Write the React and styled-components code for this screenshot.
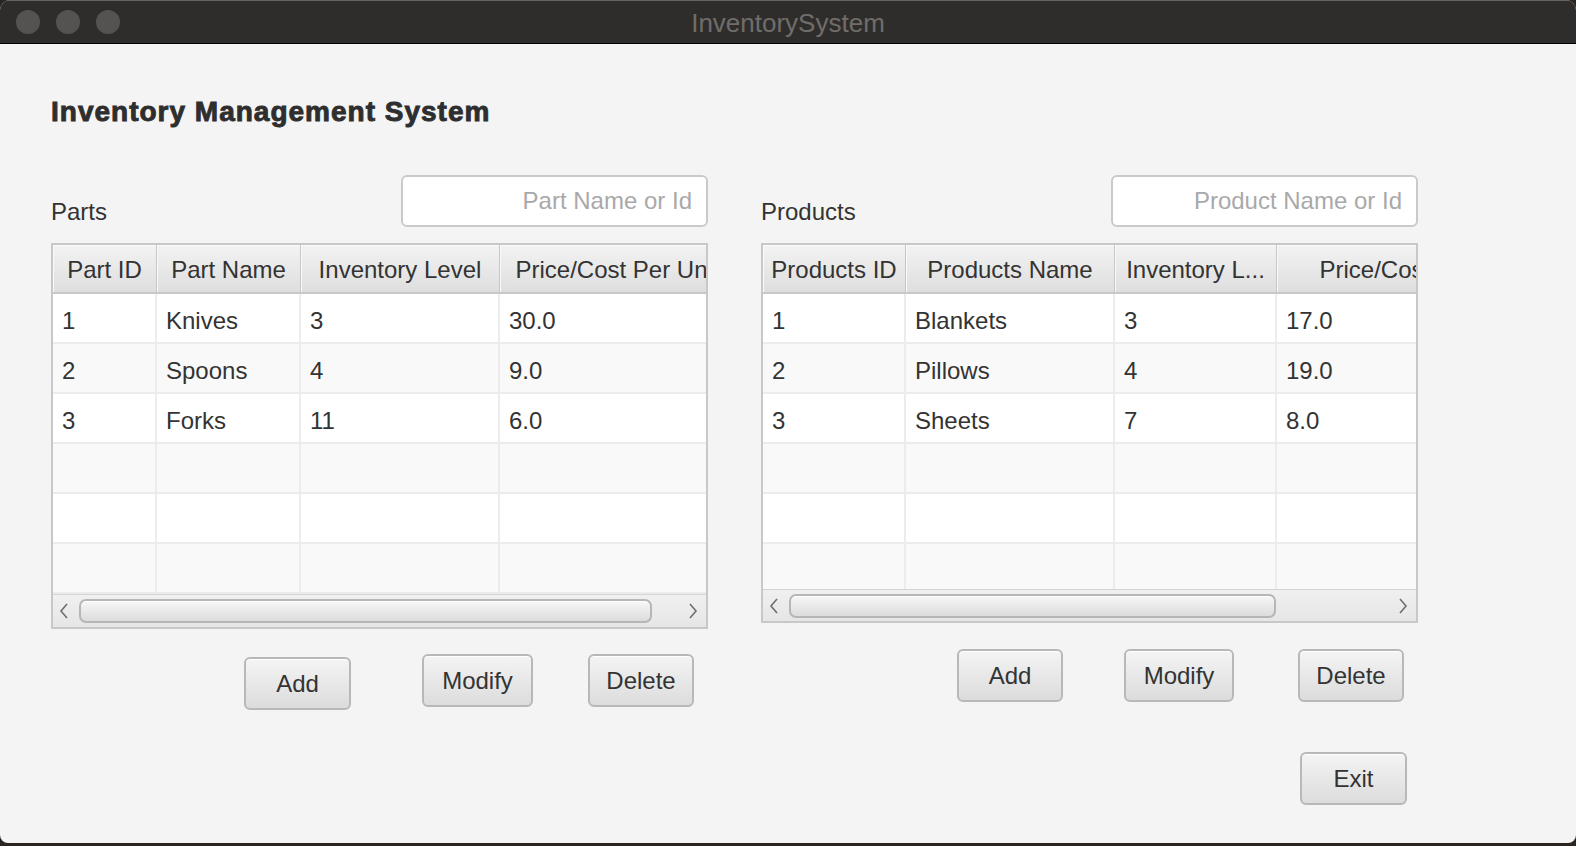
import React from 'react';
import styled, { createGlobalStyle } from 'styled-components';

const GlobalStyle = createGlobalStyle`
  html, body {
    margin: 0;
    padding: 0;
    background: #2a2520;
  }
  body {
    font-family: "Liberation Sans", Arial, sans-serif;
    color: #333;
  }
  * { box-sizing: border-box; }
`;

const Window = styled.div`
  width: 1576px;
  height: 843px;
  background: #f4f4f4;
  border-radius: 10px 10px 8px 8px;
  overflow: hidden;
  display: flex;
  flex-direction: column;
`;

const TitleBar = styled.div`
  height: 44px;
  flex-shrink: 0;
  background: #2f2d2b;
  border-top: 1px solid #67655f;
  border-bottom: 1px solid #000;
  display: grid;
  grid-template-columns: 1fr auto 1fr;
  align-items: center;
`;

const Lights = styled.div`
  display: flex;
  gap: 16px;
  padding-left: 16px;
`;

const Light = styled.span`
  width: 24px;
  height: 24px;
  border-radius: 50%;
  background: #545351;
`;

const WindowTitle = styled.div`
  font-size: 26px;
  color: #6f6d6a;
  line-height: 30px;
  padding-top: 2px;
`;

const Content = styled.div`
  padding: 52px 0 0 51px;
  display: flex;
  flex-direction: column;
`;

const Heading = styled.h1`
  margin: 0;
  font-size: 28px;
  line-height: 32px;
  font-weight: 900;
  letter-spacing: 1px;
  color: #2e2e2e;
  -webkit-text-stroke: 0.9px #2e2e2e;
`;

const Panels = styled.div`
  display: flex;
  gap: 53px;
  margin-top: 47px;
`;

const Panel = styled.section`
  width: 657px;
  display: flex;
  flex-direction: column;
`;

const PanelHeader = styled.div`
  height: 52px;
  display: flex;
  justify-content: space-between;
  align-items: flex-end;
`;

const PanelLabel = styled.div`
  font-size: 24px;
  line-height: 28px;
  padding-bottom: 1px;
  color: #333;
`;

const SearchInput = styled.input`
  width: 307px;
  height: 52px;
  border: 2px solid #cacaca;
  border-radius: 6px;
  background: #fff;
  text-align: right;
  padding: 0 14px;
  font-family: "Liberation Sans", Arial, sans-serif;
  font-size: 24px;
  color: #333;
  outline: none;

  &::placeholder {
    color: #a9a9a9;
  }
`;

const Table = styled.div`
  margin-top: 16px;
  border: 2px solid #c8c8c8;
  background: #fff;
`;

const Viewport = styled.div`
  overflow: hidden;
  height: ${(p) => p.$height}px;
`;

const Row = styled.div`
  display: grid;
  grid-template-columns: ${(p) => p.$cols};
  width: max-content;
  background: ${(p) => (p.$alt ? '#f9f9f9' : '#fff')};
`;

const HeaderCell = styled.div`
  height: 49px;
  padding-top: 3px;
  border-right: 1px solid #c6c6c6;
  border-bottom: 2px solid #c8c8c8;
  box-shadow: inset 1px 0 0 #fafafa, inset 0 1px 0 #fafafa;
  background: linear-gradient(#f3f3f3, #dedede);
  font-size: 24px;
  color: #333;
  display: flex;
  align-items: center;
  justify-content: center;
  white-space: nowrap;
  overflow: hidden;
`;

const Cell = styled.div`
  height: 50px;
  padding: 5px 0 0 9px;
  border-right: 2px solid #ececec;
  border-bottom: 2px solid #ececec;
  font-size: 24px;
  color: #333;
  display: flex;
  align-items: center;
  white-space: nowrap;
  overflow: hidden;
`;

const ScrollBar = styled.div`
  height: ${(p) => p.$height}px;
  border-top: 1px solid #d4d4d4;
  background: linear-gradient(#f0f0f0, #e6e6e6);
  display: flex;
  align-items: center;
  padding: 0 8px 0 6px;
  gap: 10px;
`;

const Track = styled.div`
  flex: 1;
  display: flex;
`;

const Thumb = styled.div`
  height: 24px;
  border: 2px solid #b6b6b6;
  border-radius: 7px;
  background: linear-gradient(#f7f7f7, #dcdcdc);
  box-shadow: inset 0 1px 0 #fff;
`;

const ButtonRow = styled.div`
  display: flex;
  align-items: flex-start;
  margin-top: ${(p) => p.$top}px;
`;

const Button = styled.button`
  width: ${(p) => p.$w}px;
  height: 53px;
  margin-left: ${(p) => p.$ml}px;
  margin-top: ${(p) => p.$mt || 0}px;
  border: 2px solid #b8b8b8;
  border-radius: 6px;
  background: linear-gradient(#f4f4f4, #dcdcdc);
  box-shadow: inset 0 1px 0 #fff;
  font-family: "Liberation Sans", Arial, sans-serif;
  font-size: 24px;
  color: #333;
  padding: 0;
  cursor: pointer;
`;

const Chevron = ({ dir }) => (
  <svg width="10" height="16" viewBox="0 0 10 16">
    <path
      d={dir === 'left' ? 'M8 1 L2 8 L8 15' : 'M2 1 L8 8 L2 15'}
      fill="none"
      stroke="#6e6e6e"
      strokeWidth="1.6"
    />
  </svg>
);

const VIEW_WIDTH = 653;

const DataTable = ({ columns, rows, bodyHeight, barHeight }) => {
  const cols = columns.map((c) => c.width + 'px').join(' ');
  const total = columns.reduce((s, c) => s + c.width, 0);
  const emptyRows = 6 - rows.length;
  return (
    <Table>
      <Viewport $height={49 + bodyHeight}>
        <Row $cols={cols}>
          {columns.map((c) => (
            <HeaderCell key={c.label}>{c.label}</HeaderCell>
          ))}
        </Row>
        {rows.map((r, i) => (
          <Row $cols={cols} $alt={i % 2 === 1} key={i}>
            {r.map((v, j) => (
              <Cell key={j}>{v}</Cell>
            ))}
          </Row>
        ))}
        {Array.from({ length: emptyRows }).map((_, i) => (
          <Row $cols={cols} $alt={(rows.length + i) % 2 === 1} key={'e' + i}>
            {columns.map((c) => (
              <Cell key={c.label} />
            ))}
          </Row>
        ))}
      </Viewport>
      <ScrollBar $height={barHeight}>
        <Chevron dir="left" />
        <Track>
          <Thumb style={{ width: (VIEW_WIDTH / total) * 100 + '%' }} />
        </Track>
        <Chevron dir="right" />
      </ScrollBar>
    </Table>
  );
};

const partColumns = [
  { label: 'Part ID', width: 104 },
  { label: 'Part Name', width: 144 },
  { label: 'Inventory Level', width: 199 },
  { label: 'Price/Cost Per Unit', width: 236 },
];

const partRows = [
  ['1', 'Knives', '3', '30.0'],
  ['2', 'Spoons', '4', '9.0'],
  ['3', 'Forks', '11', '6.0'],
];

const productColumns = [
  { label: 'Products ID', width: 143 },
  { label: 'Products Name', width: 209 },
  { label: 'Inventory L...', width: 162 },
  { label: 'Price/Cost Per Unit', width: 290 },
];

const productRows = [
  ['1', 'Blankets', '3', '17.0'],
  ['2', 'Pillows', '4', '19.0'],
  ['3', 'Sheets', '7', '8.0'],
];

export default function App() {
  return (
    <>
      <GlobalStyle />
      <Window>
        <TitleBar>
          <Lights>
            <Light />
            <Light />
            <Light />
          </Lights>
          <WindowTitle>InventorySystem</WindowTitle>
          <div />
        </TitleBar>
        <Content>
          <Heading>Inventory Management System</Heading>
          <Panels>
            <Panel>
              <PanelHeader>
                <PanelLabel>Parts</PanelLabel>
                <SearchInput placeholder="Part Name or Id" />
              </PanelHeader>
              <DataTable columns={partColumns} rows={partRows} bodyHeight={300} barHeight={33} />
              <ButtonRow $top={25}>
                <Button $w={107} $ml={193} $mt={3}>Add</Button>
                <Button $w={111} $ml={71}>Modify</Button>
                <Button $w={106} $ml={55}>Delete</Button>
              </ButtonRow>
            </Panel>
            <Panel>
              <PanelHeader>
                <PanelLabel>Products</PanelLabel>
                <SearchInput placeholder="Product Name or Id" />
              </PanelHeader>
              <DataTable columns={productColumns} rows={productRows} bodyHeight={295} barHeight={32} />
              <ButtonRow $top={26}>
                <Button $w={106} $ml={196}>Add</Button>
                <Button $w={110} $ml={61}>Modify</Button>
                <Button $w={106} $ml={64}>Delete</Button>
              </ButtonRow>
              <ButtonRow $top={50}>
                <Button $w={107} $ml={539}>Exit</Button>
              </ButtonRow>
            </Panel>
          </Panels>
        </Content>
      </Window>
    </>
  );
}
